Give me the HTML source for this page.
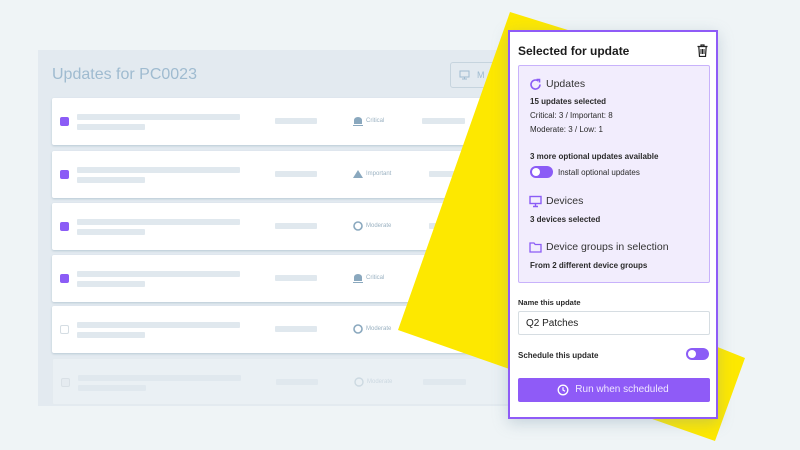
<!DOCTYPE html>
<html><head><meta charset="utf-8"><style>
*{box-sizing:border-box;margin:0;padding:0}
body{width:800px;height:450px;overflow:hidden;background:#eff4f6;font-family:"Liberation Sans",sans-serif;position:relative}
.bg{position:absolute;left:38px;top:50px;width:520px;height:356px;background:#e3eaf0}
.title{position:absolute;left:52px;top:66px;font-size:16px;color:#9fbbd0}
.mbtn{position:absolute;left:450px;top:62px;width:80px;height:26px;border:1px solid #c6d4de;border-radius:3px}
.row{position:absolute;left:52px;width:520px;height:47px;background:#fff;border-radius:2px;box-shadow:0 1px 2px #b9c9d4}
.row.f{background:#eef3f6;box-shadow:none;border:1px solid #e3eaef}
.cb{position:absolute;left:8px;top:19px;width:9px;height:9px;border-radius:2px;background:#8b5cf6}
.cb.e{background:#fff;border:1px solid #d5dde3}
.b{position:absolute;height:6px;background:#e0e8ee;border-radius:1px}
.lab{position:absolute;left:314px;top:18px;font-size:6px;line-height:11px;color:#9bb2c2}
.ic{position:absolute;left:301px;top:18px;width:10px;height:10px}
.yel{position:absolute;left:0;top:0}
.pn{position:absolute;left:508px;top:30px;width:210px;height:389px;background:#fff;border:2px solid #8f5bf7;box-shadow:0 4px 14px rgba(120,150,170,.35)}
.h{position:absolute;left:8px;top:12px;font-size:12px;font-weight:bold;color:#1c1c1c}
.box{position:absolute;left:8px;top:33px;width:192px;height:218px;background:#f2edfd;border:1px solid #c8b2fb;border-radius:2px}
.t{position:absolute;font-size:8px;color:#2a2a2a;white-space:nowrap}
.bd{font-weight:bold}
.s{font-size:10.5px;color:#333}
.tg{position:absolute;width:23px;height:12px;border-radius:6px;background:#8b5cf6}
.tg:after{content:"";position:absolute;left:2px;top:2px;width:8px;height:8px;border-radius:50%;background:#fff}
.inp{position:absolute;left:8px;top:279px;width:192px;height:24px;border:1px solid #d6dde2;border-radius:2px;font-size:10px;padding:6px 7px;color:#222}
.run{position:absolute;left:8px;top:346px;width:192px;height:24px;background:#8f5bf7;border-radius:2px;color:#f0e8ff;font-size:10px;text-align:center;line-height:24px}
</style></head><body>
<div class="bg"></div>
<div class="title">Updates for PC0023</div>
<div class="mbtn"><svg style="position:absolute;left:8px;top:7px" width="11" height="10"><rect x="1" y="1" width="9" height="6" fill="none" stroke="#9fbbd0"/><path d="M5.5 7v2M3 9h5" stroke="#9fbbd0"/></svg><span style="position:absolute;left:26px;top:7px;font-size:9px;color:#9fbbd0">M</span></div>

<div class="row" style="top:98px"><div class="cb"></div><div class="b" style="left:25px;top:16px;width:163px"></div><div class="b" style="left:25px;top:26px;width:68px"></div><div class="b" style="left:223px;top:20px;width:42px"></div><svg class="ic" viewBox="0 0 10 10"><path d="M1 8V4a4 3 0 0 1 8 0v4z" fill="#8aa8be"/><rect x="0" y="9" width="10" height="1" fill="#8aa8be"/></svg><div class="lab">Critical</div><div class="b" style="left:370px;top:20px;width:43px"></div></div>
<div class="row" style="top:151px"><div class="cb"></div><div class="b" style="left:25px;top:16px;width:163px"></div><div class="b" style="left:25px;top:26px;width:68px"></div><div class="b" style="left:223px;top:20px;width:42px"></div><svg class="ic" viewBox="0 0 10 10"><path d="M5 1L10 9H0z" fill="#8aa8be"/></svg><div class="lab">Important</div><div class="b" style="left:377px;top:20px;width:43px"></div></div>
<div class="row" style="top:203px"><div class="cb"></div><div class="b" style="left:25px;top:16px;width:163px"></div><div class="b" style="left:25px;top:26px;width:68px"></div><div class="b" style="left:223px;top:20px;width:42px"></div><svg class="ic" viewBox="0 0 10 10"><circle cx="5" cy="5" r="4" fill="none" stroke="#8aa8be" stroke-width="1.6"/></svg><div class="lab">Moderate</div><div class="b" style="left:377px;top:20px;width:43px"></div></div>
<div class="row" style="top:255px"><div class="cb"></div><div class="b" style="left:25px;top:16px;width:163px"></div><div class="b" style="left:25px;top:26px;width:68px"></div><div class="b" style="left:223px;top:20px;width:42px"></div><svg class="ic" viewBox="0 0 10 10"><path d="M1 8V4a4 3 0 0 1 8 0v4z" fill="#8aa8be"/><rect x="0" y="9" width="10" height="1" fill="#8aa8be"/></svg><div class="lab">Critical</div></div>
<div class="row" style="top:306px"><div class="cb e"></div><div class="b" style="left:25px;top:16px;width:163px"></div><div class="b" style="left:25px;top:26px;width:68px"></div><div class="b" style="left:223px;top:20px;width:42px"></div><svg class="ic" viewBox="0 0 10 10"><circle cx="5" cy="5" r="4" fill="none" stroke="#8aa8be" stroke-width="1.6"/></svg><div class="lab">Moderate</div></div>
<div class="row f" style="top:358px;opacity:.7"><div class="cb e" style="background:#e6ecf0"></div><div class="b" style="left:25px;top:16px;width:163px"></div><div class="b" style="left:25px;top:26px;width:68px"></div><div class="b" style="left:223px;top:20px;width:42px"></div><svg class="ic" viewBox="0 0 10 10"><circle cx="5" cy="5" r="4" fill="none" stroke="#c3d2dc" stroke-width="1.4"/></svg><div class="lab" style="color:#c3d2dc">Moderate</div><div class="b" style="left:370px;top:20px;width:43px"></div></div>

<svg class="yel" width="800" height="450"><polygon points="510,12 600,40 700,340 745,358 715,441 398,330" fill="#fde800"/></svg>

<div class="pn">
<div class="h">Selected for update</div>
<svg style="position:absolute;left:187px;top:12px" width="11" height="13" viewBox="0 0 11 13"><path d="M0.5 2.5h10M4 2.5V1h3v1.5M1.8 2.5l.7 10h6l.7-10" fill="none" stroke="#222" stroke-width="1.2"/><path d="M4 5v5M5.5 5v5M7 5v5" stroke="#222"/></svg>
<div class="box">
<svg style="position:absolute;left:10px;top:12px" width="13" height="13" viewBox="0 0 13 13"><path d="M11 6.5A4.5 4.5 0 1 1 9.3 3" fill="none" stroke="#8b5cf6" stroke-width="1.6"/><path d="M7.5 1.5h3v3" fill="none" stroke="#8b5cf6" stroke-width="1.6"/></svg>
<div class="t s" style="left:27px;top:12px">Updates</div>
<div class="t bd" style="left:11px;top:31px">15 updates selected</div>
<div class="t" style="left:11px;top:45px">Critical: 3 / Important: 8</div>
<div class="t" style="left:11px;top:59px">Moderate: 3 / Low: 1</div>
<div class="t bd" style="left:11px;top:86px">3 more optional updates available</div>
<div class="tg" style="left:11px;top:100px"></div>
<div class="t" style="left:39px;top:102px">Install optional updates</div>
<svg style="position:absolute;left:10px;top:129px" width="13" height="13" viewBox="0 0 13 13"><rect x="1" y="1.5" width="11" height="7" fill="none" stroke="#8b5cf6" stroke-width="1.4"/><path d="M6.5 8.5v3M4 11.5h5" stroke="#8b5cf6" stroke-width="1.4"/></svg>
<div class="t s" style="left:27px;top:129px">Devices</div>
<div class="t bd" style="left:11px;top:149px">3 devices selected</div>
<svg style="position:absolute;left:10px;top:175px" width="13" height="12" viewBox="0 0 13 12"><path d="M1 2h4l1.2 1.5H12V11H1z" fill="none" stroke="#8b5cf6" stroke-width="1.3"/></svg>
<div class="t s" style="left:27px;top:175px">Device groups in selection</div>
<div class="t bd" style="left:11px;top:195px">From 2 different device groups</div>
</div>
<div class="t bd" style="left:8px;top:266px;font-size:7.5px">Name this update</div>
<div class="inp">Q2 Patches</div>
<div class="t bd" style="left:8px;top:319px">Schedule this update</div>
<div class="tg" style="left:176px;top:316px"></div>
<div class="run"><svg style="position:absolute;left:39px;top:6px" width="12" height="12" viewBox="0 0 12 12"><circle cx="6" cy="6" r="4.8" fill="none" stroke="#fff" stroke-width="1.3"/><path d="M6 3.3V6l2 1.3" fill="none" stroke="#fff" stroke-width="1.2"/></svg><span style="padding-left:16px">Run when scheduled</span></div>
</div>
</body></html>
